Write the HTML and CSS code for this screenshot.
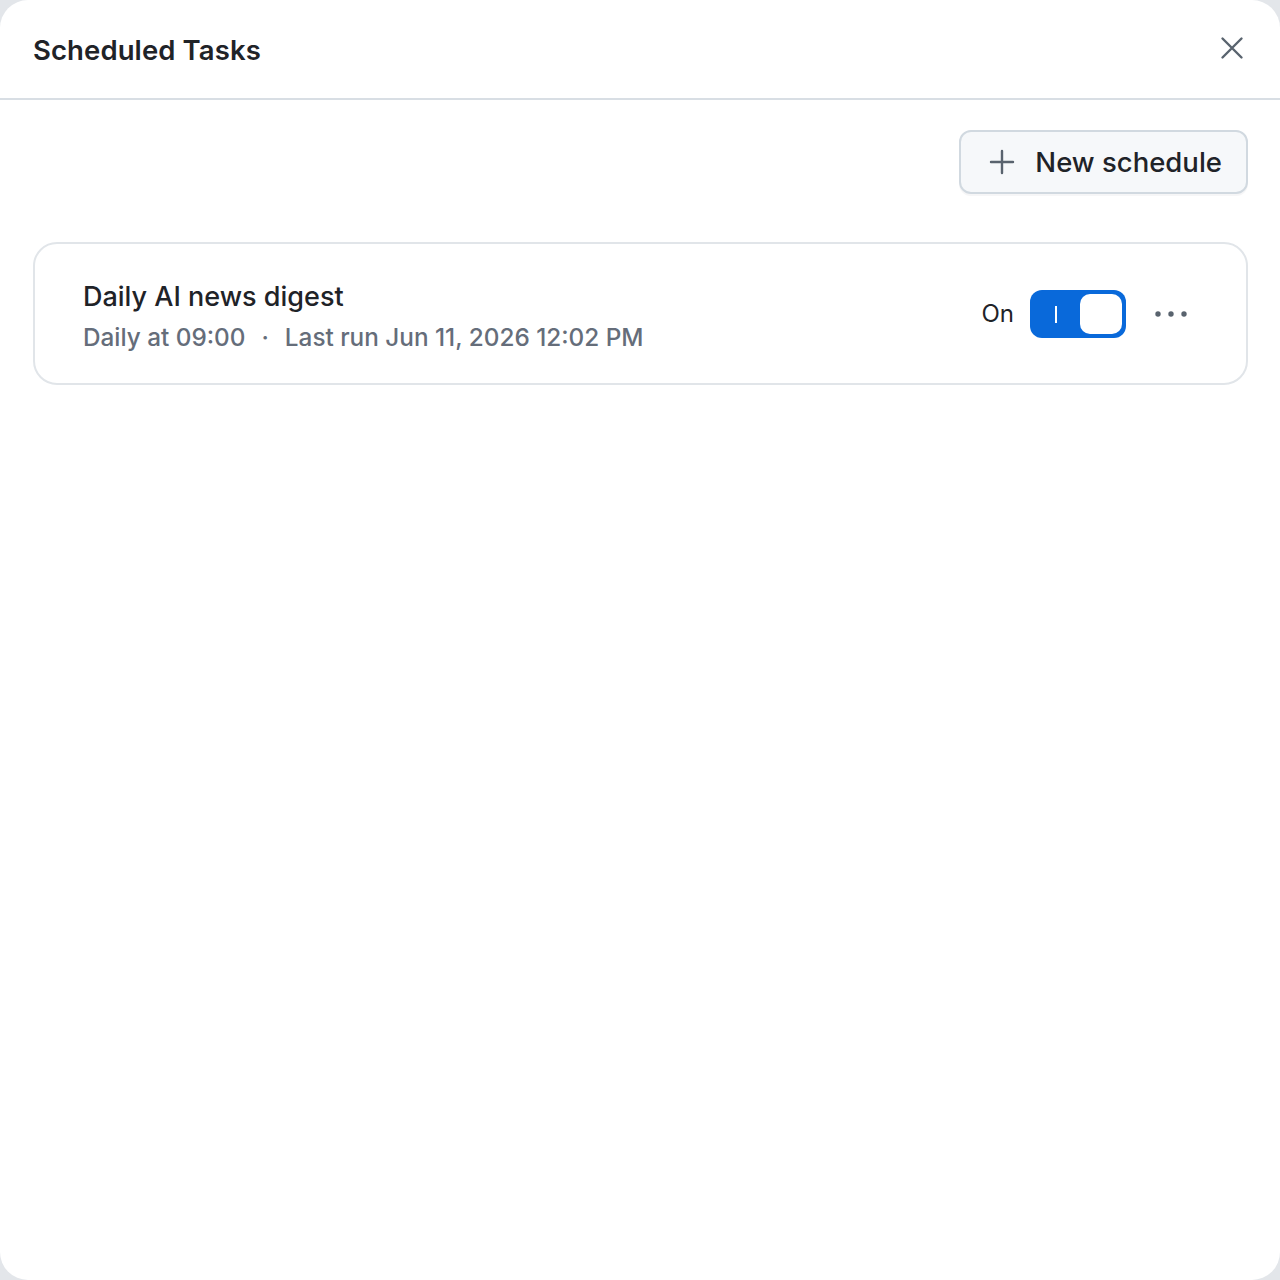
FILE: index.html
```html
<!DOCTYPE html>
<html>
<head>
<meta charset="utf-8">
<link rel="stylesheet" href="styles.css">
</head>
<body>
<div class="modal">
  <header class="header">
    <h1 class="title">Scheduled Tasks</h1>
    <button class="close" aria-label="Close">
      <svg width="24" height="24" viewBox="0 0 24 24"><path d="M2.5 2.5L21.5 21.5M21.5 2.5L2.5 21.5" stroke="#59636e" stroke-width="2.4" stroke-linecap="round" fill="none"/></svg>
    </button>
  </header>
  <main class="body">
    <div class="actions">
      <button class="btn">
        <svg width="26" height="26" viewBox="0 0 26 26"><path d="M13 2V24M2 13H24" stroke="#59636e" stroke-width="2.4" stroke-linecap="round" fill="none"/></svg>
        <span>New schedule</span>
      </button>
    </div>
    <div class="card">
      <div class="info">
        <div class="name">Daily AI news digest</div>
        <div class="meta"><span>Daily at 09:00</span><span class="dot">·</span><span>Last run Jun 11, 2026 12:02 PM</span></div>
      </div>
      <div class="controls">
        <span class="state">On</span>
        <div class="toggle"><span class="mark"></span><span class="knob"></span></div>
        <button class="more" aria-label="More">
          <svg width="34" height="8" viewBox="0 0 34 8"><circle cx="4" cy="4" r="2.7" fill="#59636e"/><circle cx="17" cy="4" r="2.7" fill="#59636e"/><circle cx="30" cy="4" r="2.7" fill="#59636e"/></svg>
        </button>
      </div>
    </div>
  </main>
</div>
</body>
</html>
```

FILE: styles.css
```css
* { box-sizing: border-box; }
html, body { margin: 0; padding: 0; height: 100%; }
body {
  background: #e3e6ea;
  font-family: Inter, "Noto Sans", "Liberation Sans", sans-serif;
  color: #1f2328;
}
.modal {
  height: 1280px;
  width: 1280px;
  background: #ffffff;
  border-radius: 28px;
  overflow: hidden;
  display: flex;
  flex-direction: column;
}
.header {
  height: 100px;
  border-bottom: 2px solid #d8dee4;
  display: flex;
  align-items: center;
  justify-content: space-between;
  padding: 0 36px 0 33px;
}
.title {
  margin: 2px 0 0 0;
  font-size: 27.5px;
  font-weight: 600;
  letter-spacing: 0.1px;
  color: #1f2328;
}
.close {
  background: none;
  border: none;
  padding: 0;
  width: 24px;
  height: 24px;
  display: flex;
  margin-top: -2px;
}
.body {
  padding: 30px 32px 0 33px;
}
.actions {
  display: flex;
  justify-content: flex-end;
}
.btn {
  height: 64px;
  padding: 0 24px 0 28px;
  background: #f6f8fa;
  border: 2px solid #d1d9e0;
  border-radius: 12px;
  display: flex;
  align-items: center;
  gap: 20px;
  font-family: inherit;
  font-size: 27.5px;
  font-weight: 500;
  color: #1f2328;
  box-shadow: 0 2px 0 rgba(31,35,40,0.04);
}
.card {
  margin-top: 48px;
  height: 143px;
  border: 2px solid #e1e5e9;
  border-radius: 24px;
  display: flex;
  align-items: center;
  justify-content: space-between;
  padding: 0 58px 0 48px;
}
.info { display: flex; flex-direction: column; gap: 9px; margin-top: 4px; }
.name {
  font-size: 27px;
  font-weight: 500;
  color: #1f2328;
}
.meta {
  font-size: 24.3px;
  font-weight: 500;
  color: #656d7a;
  display: flex;
}
.dot { padding: 0 16px 0 16px; }
.controls {
  display: flex;
  align-items: center;
  margin-top: 0;
}
.state {
  font-size: 24px;
  color: #1f2328;
  margin-right: 16px;
}
.toggle {
  width: 96px;
  height: 48px;
  background: #0969da;
  border-radius: 12px;
  position: relative;
  margin-right: 28px;
}
.mark {
  position: absolute;
  left: 25px;
  top: 16px;
  width: 2px;
  height: 17px;
  background: #ffffff;
}
.knob {
  position: absolute;
  right: 4px;
  top: 4px;
  width: 42px;
  height: 40px;
  background: #ffffff;
  border-radius: 10px;
}
.more {
  background: none;
  border: none;
  padding: 0;
  display: flex;
  width: 34px;
}
```
